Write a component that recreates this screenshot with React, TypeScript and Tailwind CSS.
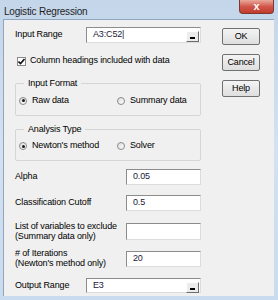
import React from "react";

const font = { fontFamily: "'Liberation Sans', Arial, sans-serif" };

function Field({ value, w = "w-[75px]", h = "h-[16px]", picker = false }: { value?: string; w?: string; h?: string; picker?: boolean }) {
    return (
        <div className={`${w} ${h} shrink-0 relative flex items-center bg-white border border-t-[#8c8c8c] border-l-[#8c8c8c] border-r-[#dcdcdc] border-b-[#dcdcdc] pl-[6px] text-[#1a1a3a]`}>
            {value}
            {picker && (
                <div className="absolute right-[1px] top-[3px] w-[13px] h-[11px] bg-[#ececec] border border-t-white border-l-white border-r-[#6d6d6d] border-b-[#6d6d6d] flex items-end justify-center pb-[2px]">
                    <div className="w-[5px] h-[2px] bg-black" />
                </div>
            )}
        </div>
    );
}

function Radio({ checked, label }: { checked?: boolean; label: string }) {
    return (
        <div className="flex items-center gap-[5px] whitespace-nowrap">
            <div className="w-[8px] h-[8px] rounded-full border border-[#8a8a8a] bg-gradient-to-br from-[#dcdcdc] to-white flex items-center justify-center">
                {checked && <div className="w-[3px] h-[3px] rounded-full bg-[#1a1a1a]" />}
            </div>
            <span>{label}</span>
        </div>
    );
}

function Group({ title, children, h }: { title: string; children: React.ReactNode; h: string }) {
    return (
        <div className={`relative ${h} border border-[#d5d5d5] rounded-[2px] flex items-center px-[3px] pt-[2px]`}>
            <span className="absolute -top-[7px] left-[8px] px-[4px] bg-[#f0f0f0] leading-[12px]">{title}</span>
            {children}
        </div>
    );
}

function Btn({ label }: { label: string }) {
    return (
        <div className="w-[38px] h-[17px] rounded-[2px] border border-[#707070] bg-gradient-to-b from-[#f4f4f4] to-[#dedede] flex items-center justify-center">
            {label}
        </div>
    );
}

export default function App() {
    return (
        <div className="w-[278px] h-[300px] bg-gradient-to-b from-[#c4d6ea] via-[#d3e1f0] to-[#c9dbee] relative overflow-hidden text-[9px] tracking-[-0.15px] text-black whitespace-nowrap" style={font}>
            {/* title bar */}
            <div className="h-[19px] flex items-start pl-[4px] pt-[4px] text-[10px] tracking-[-0.2px] text-[#1e1e1e]">
                Logistic Regression
            </div>
            <div className="absolute right-[4px] top-0 w-[35px] h-[14px] rounded-b-[4px] border border-[#7a3a33] border-t-0 bg-gradient-to-b from-[#e9a99c] via-[#d0574a] to-[#c23b2c] flex items-center justify-center text-white text-[11px] font-bold leading-none">
                x
            </div>

            {/* client */}
            <div className="absolute left-[3px] top-[19px] w-[271px] h-[277px] bg-[#f0f0f0] border-t border-l border-[#8fa6be] flex pl-[11px] pt-[7px]">
                <div className="w-[186px] flex flex-col">
                    <div className="flex items-center justify-between h-[16px]">
                        <span>Input Range</span>
                        <Field value="A3:C52|" w="w-[115px]" picker />
                    </div>
                    <div className="mt-[12px] h-[12px] flex items-center gap-[4px] pl-[2px]">
                        <div className="w-[9px] h-[9px] border border-[#8a8a8a] bg-white flex items-center justify-center">
                            <svg width="7" height="7" viewBox="0 0 7 7">
                                <path d="M0.5 3.5 L2.5 5.5 L6.5 1" stroke="#111" strokeWidth="1.6" fill="none" />
                            </svg>
                        </div>
                        <span>Column headings included with data</span>
                    </div>
                    <div className="mt-[16px]">
                        <Group title="Input Format" h="h-[33px]">
                            <div className="w-[98px]"><Radio checked label="Raw data" /></div>
                            <Radio label="Summary data" />
                        </Group>
                    </div>
                    <div className="mt-[13px]">
                        <Group title="Analysis Type" h="h-[32px]">
                            <div className="w-[98px]"><Radio checked label="Newton's method" /></div>
                            <Radio label="Solver" />
                        </Group>
                    </div>
                    <div className="mt-[8px] flex items-center justify-between">
                        <span>Alpha</span>
                        <Field value="0.05" />
                    </div>
                    <div className="mt-[10px] flex items-center justify-between">
                        <span>Classification Cutoff</span>
                        <Field value="0.5" />
                    </div>
                    <div className="mt-[10px] flex items-center justify-between">
                        <span className="leading-[10px]">List of variables to exclude<br />(Summary data only)</span>
                        <Field h="h-[17px]" />
                    </div>
                    <div className="mt-[9px] flex items-center justify-between">
                        <span className="leading-[10px] -mt-[2px]">
                            # of Iterations<br />(Newton's method only)
                        </span>
                        <Field value="20" />
                    </div>
                    <div className="mt-[10px] flex items-center justify-between">
                        <span>Output Range</span>
                        <Field value="E3" w="w-[115px]" h="h-[15px]" picker />
                    </div>
                </div>
                <div className="ml-[21px] flex flex-col gap-[9px] pt-[1px]">
                    <Btn label="OK" />
                    <Btn label="Cancel" />
                    <Btn label="Help" />
                </div>
            </div>
        </div>
    );
}
